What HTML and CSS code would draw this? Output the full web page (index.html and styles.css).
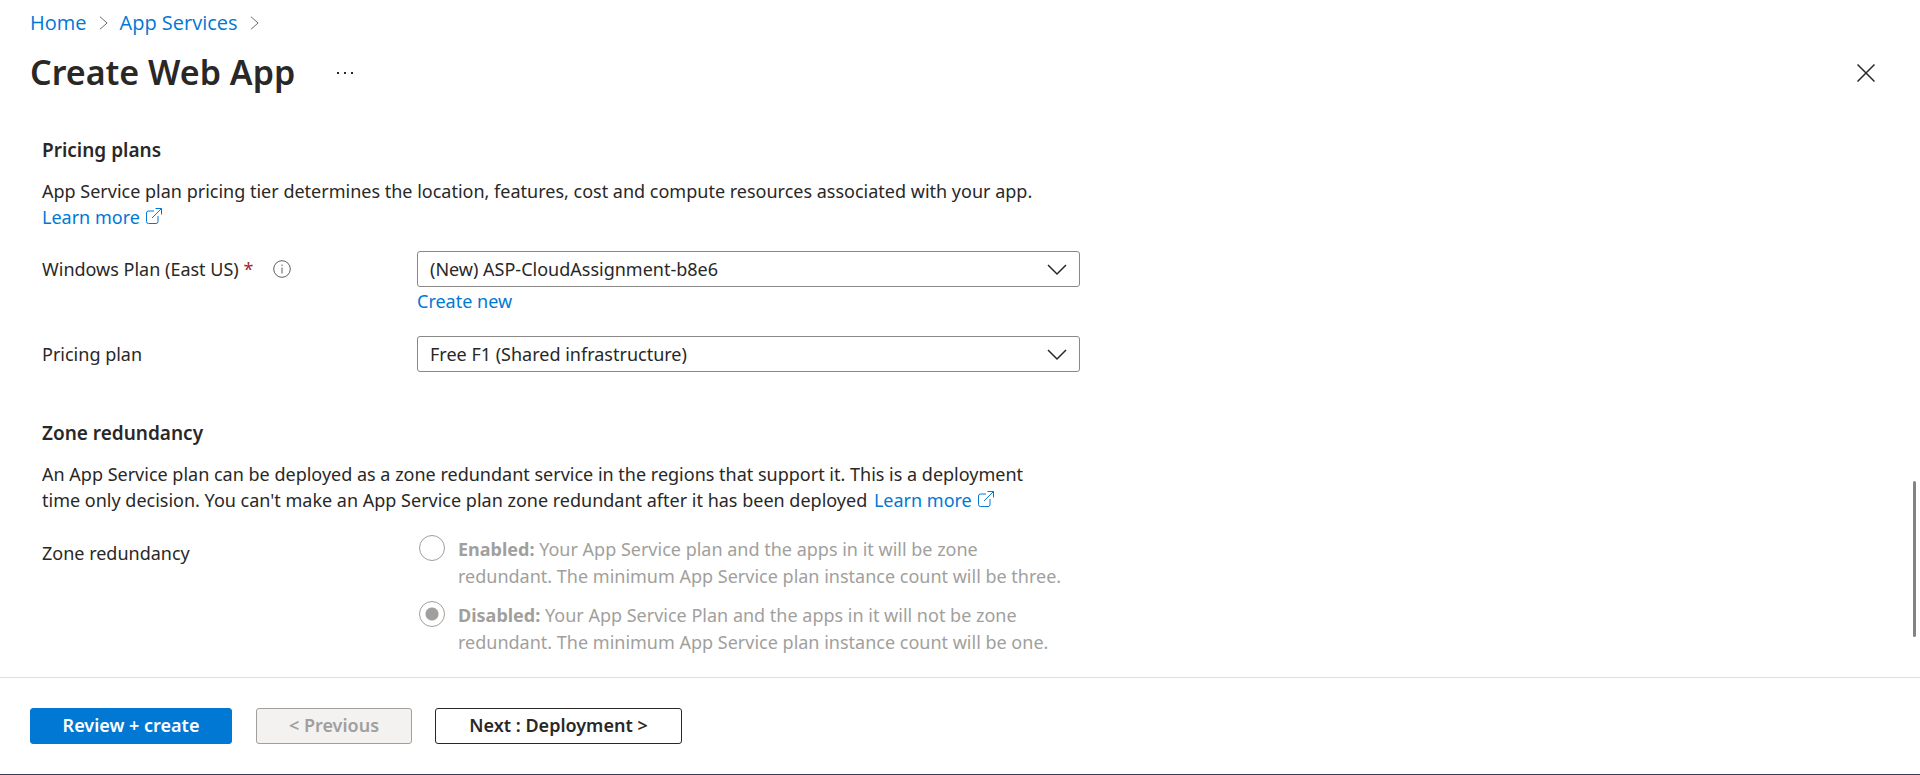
FILE: index.html
```html
<!DOCTYPE html>
<html lang="en">
<head>
<meta charset="utf-8">
<title>Create Web App</title>
<link rel="stylesheet" href="styles.css">
</head>
<body>
<div class="page">
  <header class="header">
    <nav class="breadcrumb" aria-label="Breadcrumb">
      <a href="#">Home</a>
      <svg class="crumb-arrow" viewBox="0 0 10 16"><path d="M1 1l8 7-8 7"/></svg>
      <a href="#">App Services</a>
      <svg class="crumb-arrow" viewBox="0 0 10 16"><path d="M1 1l8 7-8 7"/></svg>
    </nav>
    <div class="title-row">
      <h1 class="title">Create Web App</h1>
      <button class="icon-button" type="button" aria-label="More">
        <svg class="dots" viewBox="0 0 18 4"><path d="M1 1h2v2H1zM8 1h2v2H8zM15 1h2v2h-2z"/></svg>
      </button>
      <button class="icon-button close" type="button" aria-label="Close">
        <svg class="cross" viewBox="0 0 18 18"><path d="M.5.5l17 17M17.500.5l-17 17"/></svg>
      </button>
    </div>
  </header>

  <main class="content">
    <section class="section">
      <h2 class="section-title">Pricing plans</h2>
      <p class="text">App Service plan pricing tier determines the location, features, cost and compute resources associated with your app.<br>
        <a href="#">Learn more<svg class="external" viewBox="0 0 16 16"><path d="M8 3H2.500Q.5 3 .5 5v8.500q0 2 2 2H10q2 0 2-2V8M9.500.5h6v6M15.500.5L6 10"/></svg></a></p>
      <div class="field">
        <div class="label-cell">
          <label for="plan">Windows Plan (East US) <span class="required">*</span></label>
          <svg class="info" viewBox="0 0 18 18"><circle cx="9" cy="9" r="8.300"/><path d="M9 7.500v6M9 4.500v1.500"/></svg>
        </div>
        <div class="control">
          <div class="select-box">
            <select id="plan" class="select"><option>(New) ASP-CloudAssignment-b8e6</option></select>
            <svg class="chevron" viewBox="0 0 20 12"><path d="M1 1l9 9 9-9"/></svg>
          </div>
          <a class="create-new" href="#">Create new</a>
        </div>
      </div>
      <div class="field">
        <div class="label-cell"><label for="pricing">Pricing plan</label></div>
        <div class="control">
          <div class="select-box">
            <select id="pricing" class="select"><option>Free F1 (Shared infrastructure)</option></select>
            <svg class="chevron" viewBox="0 0 20 12"><path d="M1 1l9 9 9-9"/></svg>
          </div>
        </div>
      </div>
    </section>

    <section class="section">
      <h2 class="section-title">Zone redundancy</h2>
      <p class="text">An App Service plan can be deployed as a zone redundant service in the regions that support it. This is a deployment<br>
        time only decision. You can't make an App Service plan zone redundant after it has been deployed <a class="inline-link" href="#">Learn more<svg class="external" viewBox="0 0 16 16"><path d="M8 3H2.500Q.5 3 .5 5v8.500q0 2 2 2H10q2 0 2-2V8M9.500.5h6v6M15.500.5L6 10"/></svg></a></p>
      <div class="field" role="radiogroup" aria-labelledby="zone-label">
        <div class="label-cell zone-label" id="zone-label">Zone redundancy</div>
        <div class="radios">
          <div class="option">
            <input class="radio" type="radio" name="zone" id="zone-on" disabled>
            <label for="zone-on"><b>Enabled:</b> Your App Service plan and the apps in it will be zone<br>redundant. The minimum App Service plan instance count will be three.</label>
          </div>
          <div class="option">
            <input class="radio" type="radio" name="zone" id="zone-off" disabled checked>
            <label for="zone-off"><b>Disabled:</b> Your App Service Plan and the apps in it will not be zone<br>redundant. The minimum App Service plan instance count will be one.</label>
          </div>
        </div>
      </div>
    </section>
    <div class="scroll-thumb"></div>
  </main>

  <footer class="footer">
    <button class="button primary" type="button">Review + create</button>
    <button class="button previous" type="button" disabled>&lt; Previous</button>
    <button class="button next" type="button">Next : Deployment &gt;</button>
  </footer>
</div>
</body>
</html>
```

FILE: styles.css
```css
* {
  box-sizing: border-box;
}

body {
  margin: 0;
  background: #fff;
  color: #292827;
  font-family: "Noto Sans", "Open Sans", sans-serif;
  font-size: 18px;
  line-height: 26px;
}

a {
  color: #0078d4;
  text-decoration: none;
}

svg {
  display: block;
  fill: none;
  stroke: currentColor;
}

.page {
  display: flex;
  flex-direction: column;
  min-height: 100vh;
  border-bottom: 1px solid #3a3f58;
}

.header {
  padding: 10px 30px 0;
}

.breadcrumb {
  display: flex;
  align-items: center;
  gap: 12px;
  font-family: "Open Sans", "Noto Sans", sans-serif;
  font-size: 20px;
}

.crumb-arrow {
  width: 9px;
  height: 16px;
  color: #605e5c;
}

.title-row {
  display: flex;
  align-items: center;
  height: 73px;
}

.title {
  margin: 0;
  padding-bottom: 2px;
  font-size: 34px;
  line-height: 44px;
  font-weight: 600;
}

.icon-button {
  padding: 12px;
  border: 0;
  background: none;
  color: #292827;
}

.title + .icon-button {
  margin-left: 29px;
}

.close {
  margin-left: auto;
  padding: 15px;
}

.dots {
  width: 18px;
  height: 4px;
  fill: currentColor;
  stroke: none;
}

.cross {
  width: 18px;
  height: 18px;
  stroke-width: 1.500;
}

.content {
  position: relative;
  flex: 1;
  padding: 28px 42px 0;
}

.section {
  max-width: 1038px;
  margin-bottom: 48px;
}

.section:last-of-type {
  margin-bottom: 10px;
}

.section-title {
  margin: 0 0 15px;
  font-size: 19px;
  line-height: 26px;
  font-weight: 600;
}

.text {
  margin: 0;
  white-space: nowrap;
}

.inline-link {
  margin-left: 2px;
}

.external {
  display: inline-block;
  width: 16px;
  height: 16px;
  margin-left: 6px;
}

.field {
  display: grid;
  grid-template-columns: 375px 1fr;
  margin-top: 21px;
}

.field + .field {
  margin-top: 22px;
}

.label-cell {
  display: flex;
  align-items: center;
  gap: 20px;
  height: 36px;
}

.required {
  color: #a4262c;
}

.info {
  width: 18px;
  height: 18px;
  color: #605e5c;
}

.select-box {
  position: relative;
}

.select {
  display: block;
  width: 100%;
  height: 36px;
  padding: 0 44px 0 12px;
  border: 1px solid #8a8886;
  border-radius: 3px;
  appearance: none;
  background: #fff;
  color: inherit;
  font: inherit;
}

.chevron {
  position: absolute;
  top: 13px;
  right: 13px;
  width: 20px;
  height: 12px;
  stroke-width: 1.500;
  pointer-events: none;
}

.create-new {
  display: block;
  margin-top: 1px;
}

.zone-label {
  height: 38px;
}

.radios {
  display: flex;
  flex-direction: column;
  gap: 11px;
  padding-top: 1px;
  line-height: 27px;
  color: #a19f9d;
}

.option {
  display: flex;
  gap: 13px;
  padding-left: 2px;
  white-space: nowrap;
}

.option label {
  padding-top: 1px;
}

.radio {
  flex: none;
  width: 26px;
  height: 26px;
  margin: 0;
  border: 1px solid #a19f9d;
  border-radius: 50%;
  appearance: none;
}

.radio:checked {
  background: radial-gradient(circle, #a19f9d 6px, transparent 7px);
}

.scroll-thumb {
  position: absolute;
  right: 4px;
  bottom: 40px;
  width: 3px;
  height: 156px;
  border-radius: 2px;
  background: #838383;
}

.footer {
  display: flex;
  padding: 30px;
  border-top: 1px solid #dddddd;
}

.button {
  height: 36px;
  padding: 0 0 2px;
  border: 1px solid #292827;
  border-radius: 3px;
  background: #fff;
  color: #292827;
  font: inherit;
  font-weight: 600;
}

.primary {
  width: 202px;
  border-color: #0078d4;
  background: #0078d4;
  color: #fff;
}

.previous {
  width: 156px;
  margin-left: 24px;
  border-color: #a19f9d;
  background: #f3f2f1;
  color: #a19f9d;
}

.next {
  width: 247px;
  margin-left: 23px;
}
```
